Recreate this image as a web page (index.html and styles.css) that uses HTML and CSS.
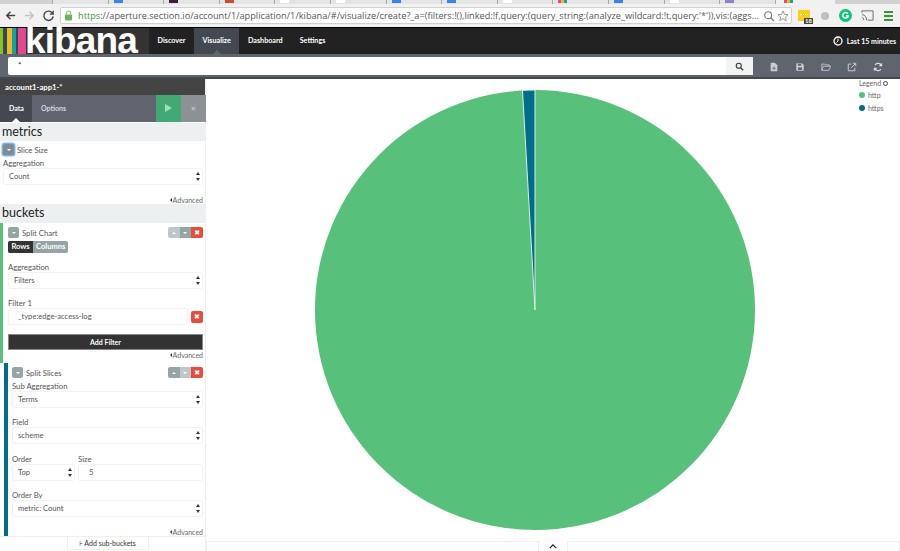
FILE: index.html
```html
<!DOCTYPE html>
<html lang="en">
<head>
    <meta charset="UTF-8">
    <title>Visualize - Kibana</title>
    <link rel="stylesheet" href="styles.css">
</head>
<body>

<div class="chrome-tabs">
    <span class="tab"></span>
    <span class="tab"><i class="fav blue"></i></span>
    <span class="tab"><i class="fav dark"></i></span>
    <span class="tab"><i class="fav red"></i></span>
    <span class="tab"><i class="fav white"></i></span>
    <span class="tab"><i class="fav white"></i></span>
    <span class="tab"><i class="fav blue"></i></span>
    <span class="tab"><i class="fav blue"></i></span>
    <span class="tab"><i class="fav white"></i></span>
    <span class="tab"><i class="fav stripes"></i></span>
    <span class="tab"><i class="fav blue"></i></span>
    <span class="tab"><i class="fav white"></i></span>
    <span class="tab"><i class="fav purple"></i></span>
    <span class="tab tab-active"><i class="fav stripes"></i></span>
</div>

<div class="chrome-bar">
    <svg class="nav-icon" viewBox="0 0 14 14"><path d="M12 7H3M7 3L3 7l4 4" fill="none" stroke="#444" stroke-width="1.6"/></svg>
    <svg class="nav-icon" viewBox="0 0 14 14"><path d="M2 7h9M7 3l4 4-4 4" fill="none" stroke="#c4c4c4" stroke-width="1.6"/></svg>
    <svg class="nav-icon" viewBox="0 0 14 14"><path d="M11.5 5A5 5 0 1 0 12 8M12 2v3.5H8.5" fill="none" stroke="#444" stroke-width="1.5"/></svg>
    <div class="omnibox">
        <svg class="lock" viewBox="0 0 10 12"><path d="M2.5 5V3.5a2.500 2.500 0 0 1 5 0V5" fill="none" stroke="#8fbf7f" stroke-width="1.2"/><rect x="1" y="5" width="8" height="6.5" rx="1" fill="#6db35a"/></svg>
        <span class="url"><span class="https">https</span>://aperture.section.io/account/1/application/1/kibana/#/visualize/create?_a=(filters:!(),linked:!f,query:(query_string:(analyze_wildcard:!t,query:'*')),vis:(aggs...</span>
        <svg class="omni-icon" viewBox="0 0 14 14"><circle cx="6" cy="6" r="4" fill="none" stroke="#777" stroke-width="1.3"/><path d="M9 9l4 4" stroke="#777" stroke-width="1.5"/></svg>
        <svg class="omni-icon" viewBox="0 0 14 14"><path d="M7 1l1.800 4 4.200.4-3.200 2.800 1 4.300L7 10.200l-3.800 2.300 1-4.300L1 5.400 5.200 5z" fill="none" stroke="#888"/></svg>
    </div>
    <span class="ext-yellow"><b class="ext-count">18</b></span>
    <i class="ext-dot"></i>
    <svg class="ext-g" viewBox="0 0 14 14"><circle cx="7" cy="7" r="7" fill="#10c27a"/><path d="M9.5 5A3 3 0 1 0 10 7.500H7.500" fill="none" stroke="#fff" stroke-width="1.6"/></svg>
    <svg class="ext-cast" viewBox="0 0 14 14"><path d="M1 4V2h12v10H7" fill="none" stroke="#666"/><path d="M1 6a6 6 0 0 1 5 6M1 9a3 3 0 0 1 2 3" fill="none" stroke="#666"/></svg>
    <span class="hamburger"><i></i><i></i><i></i></span>
</div>

<nav class="topnav">
    <div class="logo">
        <span class="logo-bars"><i class="b1"></i><i class="b2"></i><i class="b3"></i><i class="b4"></i><i class="b2 thin"></i><i class="b5"></i></span>
        <span class="logo-text">kibana</span>
    </div>
    <a class="nav-link">Discover</a>
    <a class="nav-link active">Visualize</a>
    <a class="nav-link">Dashboard</a>
    <a class="nav-link">Settings</a>
    <span class="timepicker">
        <svg class="clock" viewBox="0 0 10 10"><circle cx="5" cy="5" r="4" fill="none" stroke="#fff" stroke-width="1.3"/><path d="M5 2.500V5L3.500 6.500" fill="none" stroke="#fff"/></svg>
        Last 15 minutes
    </span>
</nav>

<div class="querybar">
    <div class="query">
        <span class="query-text">*</span>
        <span class="query-btn"><svg viewBox="0 0 12 12"><circle cx="5" cy="5" r="3.400" fill="none" stroke="#333" stroke-width="1.4"/><path d="M7.500 7.500L11 11" stroke="#333" stroke-width="1.6"/></svg></span>
    </div>
    <div class="tools">
        <svg viewBox="0 0 12 12"><path d="M2 1h5l3 3v7H2z" fill="#c9ccd1"/><path d="M6 5.500v4M4 7.500h4" stroke="#5f646e"/></svg>
        <svg viewBox="0 0 12 12"><path d="M1.500 1.500h7l2 2v7h-9z" fill="#c9ccd1"/><rect x="3.500" y="2" width="4" height="2.500" fill="#5f646e"/><rect x="3.500" y="6.500" width="5" height="3" fill="#5f646e"/></svg>
        <svg viewBox="0 0 12 12"><path d="M1 10V2.500h3.500l1 1H10v1.500M1 10h8.500l2-5H3z" fill="none" stroke="#c9ccd1"/></svg>
        <svg viewBox="0 0 12 12"><path d="M9.500 7v3.500h-8v-8H5" fill="none" stroke="#c9ccd1" stroke-width="1.2"/><path d="M5 7l5-5M7 1.500h3.500V5" fill="none" stroke="#c9ccd1" stroke-width="1.2"/></svg>
        <svg viewBox="0 0 12 12"><path d="M10 4.500A4.300 4.300 0 0 0 2.500 3.500M2 7.500a4.300 4.300 0 0 0 7.500 1" fill="none" stroke="#dfe1e5" stroke-width="1.5"/><path d="M11 1v4H7zM1 11V7h4z" fill="#dfe1e5"/></svg>
    </div>
</div>

<div class="main">
    <aside class="sidebar">
        <div class="index-title">account1-app1-*</div>
        <div class="side-tabs">
            <span class="side-tab current">Data</span>
            <span class="side-tab">Options</span>
            <span class="side-play"></span>
            <span class="side-close">&#10005;</span>
        </div>

        <h3 class="section-head metrics-head">metrics</h3>
        <div class="metric-block">
            <div class="agg-title first">
                <span class="toggle focused"><i></i></span>
                <span>Slice Size</span>
            </div>
            <label class="field-label">Aggregation</label>
            <div class="select">Count</div>
            <div class="advanced">Advanced</div>
        </div>

        <h3 class="section-head buckets-head">buckets</h3>
        <div class="bucket green">
            <div class="agg-title">
                <span class="toggle"><i></i></span>
                <span>Split Chart</span>
                <span class="agg-btns">
                    <span class="up faded"><i></i></span><span class="down"><i></i></span><span class="remove">&#10006;</span>
                </span>
            </div>
            <div class="rows-cols"><span class="rows">Rows</span><span class="cols">Columns</span></div>
            <label class="field-label gap-label">Aggregation</label>
            <div class="select">Filters</div>
            <label class="field-label gap-label">Filter 1</label>
            <div class="filter-row">
                <div class="input filter-input">_type:edge-access-log</div>
                <span class="filter-remove">&#10006;</span>
            </div>
            <div class="add-filter">Add Filter</div>
            <div class="advanced">Advanced</div>
        </div>

        <div class="bucket blue">
            <div class="agg-title">
                <span class="toggle"><i></i></span>
                <span>Split Slices</span>
                <span class="agg-btns">
                    <span class="up"><i></i></span><span class="down faded"><i></i></span><span class="remove">&#10006;</span>
                </span>
            </div>
            <label class="field-label sub-label">Sub Aggregation</label>
            <div class="select">Terms</div>
            <label class="field-label gap-label">Field</label>
            <div class="select">scheme</div>
            <div class="order-row">
                <div class="order-col">
                    <label class="field-label">Order</label>
                    <div class="select">Top</div>
                </div>
                <div class="size-col">
                    <label class="field-label">Size</label>
                    <div class="input size-input">5</div>
                </div>
            </div>
            <label class="field-label gap-label">Order By</label>
            <div class="select">metric: Count</div>
            <div class="advanced">Advanced</div>
        </div>
        <div class="add-sub"><span>&#8870; Add sub-buckets</span></div>
    </aside>

    <section class="chart-area">
        <div class="chart">
            <svg class="pie" viewBox="0 0 440 440">
                <circle cx="220" cy="220" r="220" fill="#57c17b"/>
                <path d="M220 220L207.5 .4A220 220 0 0 1 220 0Z" fill="#006e8a" stroke="#dcefe3" stroke-width="1"/>
            </svg>
            <div class="legend">
                <div class="legend-title">Legend <i class="legend-toggle"></i></div>
                <div class="legend-item"><i class="dot dot-http"></i>http</div>
                <div class="legend-item"><i class="dot dot-https"></i>https</div>
            </div>
        </div>
        <div class="spy">
            <span class="spy-side"></span>
            <span class="spy-caret"><svg viewBox="0 0 10 6"><path d="M1 5l4-4 4 4" fill="none" stroke="#222" stroke-width="1.6"/></svg></span>
            <span class="spy-side"></span>
        </div>
    </section>
</div>

</body>
</html>
```

FILE: styles.css
```css
* {
    box-sizing: border-box;
}
html, body {
    margin: 0;
    height: 551px;
    overflow: hidden;
}
body {
    font-family: "Lato", "Liberation Sans", "DejaVu Sans", sans-serif;
    font-size: 8px;
    color: #444;
    background: #fff;
    width: 900px;
}

/* browser chrome */
.chrome-tabs {
    height: 4px;
    display: flex;
    padding-left: 52px;
    background: #d2d2d2;
    overflow: hidden;
}
.tab {
    width: 55.6px;
    padding-left: 5px;
    background: #e4e4e4;
    border-left: 1px solid #a8a8a8;
    flex: none;
}
.tab-active {
    background: #f1f1f1;
    padding-left: 8px;
    width: 60px;
}
.fav {
    display: block;
    width: 9px;
    height: 3px;
}
.fav.blue { background: #3b82f0; }
.fav.dark { background: #3d1f3d; }
.fav.red { background: #d04a3a; }
.fav.white { background: #fff; }
.fav.purple { background: #8a86c8; }
.fav.stripes { background: linear-gradient(90deg, #e8478b 33%, #f5b81c 33% 66%, #12a5a0 66%); }

.chrome-bar {
    height: 23px;
    background: #f1f1f1;
    display: flex;
    align-items: center;
    padding-left: 4px;
}
.nav-icon {
    width: 13px;
    height: 13px;
    margin-right: 6px;
    flex: none;
}
.omnibox {
    width: 732px;
    height: 17px;
    margin-left: -1px;
    background: #fff;
    border: 1px solid #d0d0d0;
    border-radius: 2px;
    display: flex;
    align-items: center;
    padding-left: 3px;
    flex: none;
}
.lock {
    width: 9px;
    height: 11px;
    flex: none;
}
.url {
    margin-left: 5px;
    font-family: "Open Sans", "Liberation Sans", sans-serif;
    font-size: 9.2px;
    color: #555;
    white-space: nowrap;
    width: 683px;
    flex: none;
}
.https {
    color: #3a9a3a;
}
.omni-icon {
    width: 12px;
    height: 12px;
    margin-left: 2px;
    flex: none;
}
.ext-yellow {
    position: relative;
    width: 12px;
    height: 11px;
    margin: -1px 0 0 6px;
    background: #f7cf14;
    flex: none;
}
.ext-yellow::before {
    content: "";
    position: absolute;
    left: 2px;
    right: 2px;
    top: 4px;
    border-top: 1px dotted #fff;
}
.ext-count {
    position: absolute;
    right: -3px;
    bottom: -3px;
    background: #444;
    color: #fff;
    font-size: 6px;
    line-height: 6px;
    padding: 0 1px;
}
.ext-dot {
    width: 8px;
    height: 8px;
    margin-left: 11px;
    border-radius: 50%;
    background: #c0c0c0;
    flex: none;
}
.ext-g {
    width: 13px;
    height: 13px;
    margin-left: 10px;
    flex: none;
}
.ext-cast {
    width: 13px;
    height: 13px;
    margin-left: 9px;
    flex: none;
}
.hamburger {
    margin-left: 10px;
    width: 9px;
    display: flex;
    flex-direction: column;
    gap: 2px;
    flex: none;
}
.hamburger i {
    height: 2px;
    background: #2e9a36;
}

/* kibana nav */
.topnav {
    height: 27px;
    background: #222;
    border-top: 1px solid #000;
    display: flex;
    align-items: stretch;
}
.logo {
    width: 149px;
    background: #333;
    display: flex;
    flex: none;
}
.logo-bars {
    display: flex;
    height: 26px;
    flex: none;
}
.logo-bars i {
    display: block;
}
.b1 { width: 3px; background: #8cc220; }
.b2 { width: 4px; background: #2f4a5c; }
.b2.thin { width: 2px; }
.b3 { width: 5px; background: #f5b81c; }
.b4 { width: 4px; background: #12a5a0; }
.b5 { width: 8px; background: #e8478b; }
.logo-text {
    font-family: "Liberation Sans", sans-serif;
    font-size: 37px;
    font-weight: bold;
    color: #fff;
    line-height: 26px;
    letter-spacing: -0.9px;
    margin-left: -1px;
}
.nav-link {
    padding: 0 8.5px;
    line-height: 26px;
    font-size: 7.2px;
    font-weight: bold;
    color: #fff;
    white-space: nowrap;
}
.nav-link.active {
    background: #444951;
    position: relative;
}
.nav-link.active::after {
    content: "";
    position: absolute;
    left: 50%;
    bottom: 0;
    margin-left: -4px;
    border: 4px solid transparent;
    border-top: 0;
    border-bottom-color: #5f646e;
}
.timepicker {
    margin-left: auto;
    padding-right: 4px;
    display: flex;
    align-items: center;
    gap: 4px;
    font-weight: bold;
    color: #fff;
    font-size: 7px;
}
.clock {
    width: 10px;
    height: 10px;
}

/* search */
.querybar {
    height: 25px;
    background: #5f646e;
    border-bottom: 2px solid #444951;
    display: flex;
    padding: 3px 0 0 8px;
}
.query {
    width: 745px;
    height: 18px;
    background: #fff;
    border-radius: 2px;
    display: flex;
    justify-content: space-between;
}
.query-text {
    padding: 3px 0 0 10px;
    font-size: 8px;
    color: #222;
}
.query-btn {
    width: 27px;
    background: #f1f3f4;
    display: flex;
    align-items: center;
    justify-content: center;
}
.query-btn svg {
    width: 9px;
    height: 9px;
}
.tools {
    display: flex;
    gap: 16px;
    padding: 5px 0 0 16px;
}
.tools svg {
    width: 10px;
    height: 10px;
}

/* layout */
.main {
    display: flex;
    height: 472px;
}
.sidebar {
    width: 206px;
    background: #fff;
    border-right: 1px solid #eceff0;
    flex: none;
}
.index-title {
    height: 16px;
    background: #444;
    color: #fff;
    font-weight: bold;
    font-size: 7.7px;
    line-height: 16px;
    padding-left: 5px;
}
.side-tabs {
    height: 27px;
    background: #5f646e;
    display: flex;
    align-items: center;
    color: #d6d8da;
    font-weight: bold;
    font-size: 7px;
    margin-right: -1px;
}
.side-tab {
    height: 27px;
    line-height: 27px;
    padding: 0 9px;
    text-align: center;
}
.side-tab.current {
    width: 32px;
    background: #444951;
    color: #fff;
    position: relative;
}
.side-tab.current::after {
    content: "";
    position: absolute;
    left: 12px;
    bottom: 0;
    border: 4px solid transparent;
    border-top: 0;
    border-bottom-color: #fff;
}
.side-play {
    margin-left: auto;
    width: 25px;
    height: 27px;
    background: #42a874;
    position: relative;
}
.side-play::after {
    content: "";
    position: absolute;
    left: 9px;
    top: 9px;
    border: 4px solid transparent;
    border-left: 7px solid #a4dcbd;
    border-right: 0;
}
.side-close {
    width: 25px;
    height: 27px;
    line-height: 27px;
    background: #8a9296;
    color: #ccd1d3;
    text-align: center;
    font-size: 7px;
}
.section-head {
    margin: 0;
    background: #ecf0f1;
    color: #222;
    font-size: 12.5px;
    font-weight: normal;
    height: 19px;
    line-height: 18px;
    padding-left: 2px;
}
.metrics-head {
    margin-top: 1px;
    height: 18px;
}
.metric-block {
    padding: 0 2px 0 3px;
}
.agg-title {
    display: flex;
    align-items: center;
    gap: 3px;
    height: 13px;
    margin-top: 3px;
    font-size: 7.7px;
    color: #555;
}
.agg-title.first {
    margin-top: 1px;
    height: 15px;
}
.toggle {
    width: 11px;
    height: 11px;
    background: #95a5a6;
    border-radius: 2px;
    display: flex;
    align-items: center;
    justify-content: center;
    flex: none;
}
.toggle.focused {
    box-shadow: 0 0 0 1.5px #7db4e8;
    background: #7d8c95;
}
.toggle i, .down i {
    display: block;
    border: 2px solid transparent;
    border-bottom: 0;
    border-top: 2.5px solid #fff;
}
.up i {
    display: block;
    border: 2px solid transparent;
    border-top: 0;
    border-bottom: 2.5px solid #fff;
}
.agg-btns {
    margin-left: auto;
    display: flex;
    border-radius: 2px;
    overflow: hidden;
}
.agg-btns span {
    width: 11.7px;
    height: 11px;
    background: #95a5a6;
    display: flex;
    align-items: center;
    justify-content: center;
}
.agg-btns .faded {
    background: #bdc6c9;
}
.agg-btns .remove, .filter-remove {
    background: #e74c3c;
    color: #fff;
    font-family: "DejaVu Sans", sans-serif;
    font-size: 7px;
}
.field-label {
    display: block;
    font-size: 7.7px;
    color: #555;
    line-height: 8px;
}
.metric-block .field-label {
    margin-top: 2px;
}
.select, .input {
    height: 17px;
    margin-top: 1px;
    border: 1px solid #f0f2f3;
    border-radius: 3px;
    background: #fff;
    color: #555;
    font-size: 7.6px;
    line-height: 15px;
    padding-left: 5px;
    position: relative;
}
.select::before, .select::after {
    content: "";
    position: absolute;
    right: 2px;
    border: 2px solid transparent;
}
.select::before {
    top: 3px;
    border-top: 0;
    border-bottom: 3px solid #333;
}
.select::after {
    bottom: 3px;
    border-bottom: 0;
    border-top: 3px solid #333;
}
.advanced {
    text-align: right;
    color: #666;
    font-size: 7px;
    line-height: 8px;
    margin-top: 11px;
}
.advanced::before {
    content: "";
    display: inline-block;
    border: 2px solid transparent;
    border-left: 0;
    border-right: 2px solid #333;
    margin-right: 1px;
    vertical-align: 1px;
}
.bucket {
    padding: 0 2px 0 5px;
    overflow: hidden;
}
.bucket.green {
    border-left: 3px solid #57c17b;
    height: 140px;
}
.bucket.blue {
    border-left: 4px solid #006e8a;
    margin-left: 4px;
    padding-left: 4px;
    height: 173px;
}
.rows-cols {
    display: flex;
    width: fit-content;
    margin-top: 2px;
    background: #95a5a6;
    border-radius: 2px;
    overflow: hidden;
    color: #fff;
    font-weight: bold;
    font-size: 7.5px;
    line-height: 12px;
}
.rows {
    background: #333;
    padding: 0 3.5px;
}
.cols {
    padding: 0 3px;
}
.gap-label {
    margin-top: 10px;
}
.filter-row {
    display: flex;
    gap: 3px;
    align-items: center;
    margin-top: 1px;
}
.filter-input {
    flex: 1;
    margin-top: 0;
    padding-left: 9px;
}
.filter-remove {
    width: 12px;
    height: 12px;
    border-radius: 2px;
    display: flex;
    align-items: center;
    justify-content: center;
}
.add-filter {
    height: 16px;
    margin-top: 9px;
    background: #333;
    border: 1px solid #888;
    color: #fff;
    font-weight: bold;
    font-size: 7px;
    line-height: 14px;
    text-align: center;
}
.bucket.green .advanced {
    margin-top: 1px;
}
.sub-label {
    margin-top: 3px;
}
.order-row {
    display: flex;
    gap: 3px;
    margin-top: 11px;
}
.order-col {
    width: 63px;
}
.size-col {
    flex: 1;
}
.size-input {
    padding-left: 10px;
}
.add-sub {
    display: flex;
    justify-content: center;
    height: 14px;
    border-top: 1px solid #eee;
    padding-left: 10px;
}
.add-sub span {
    width: 82px;
    text-align: center;
    font-size: 7px;
    color: #333;
    line-height: 12px;
    border: 1px solid #eee;
    border-top: 0;
    height: 13px;
}

/* chart */
.chart-area {
    flex: 1;
    display: flex;
    flex-direction: column;
}
.chart {
    flex: 1;
    position: relative;
}
.pie {
    position: absolute;
    left: 109px;
    top: 11px;
    width: 440px;
    height: 440px;
}
.legend {
    position: absolute;
    left: 653px;
    top: 0;
    color: #666;
    font-size: 7px;
}
.legend-title {
    line-height: 9px;
}
.legend-toggle {
    display: inline-block;
    width: 5px;
    height: 5px;
    border-radius: 50%;
    border: 1px solid #444;
}
.legend-item {
    display: flex;
    align-items: center;
    gap: 3px;
    height: 13px;
}
.dot {
    width: 6px;
    height: 6px;
    border-radius: 50%;
}
.dot-http {
    background: #57c17b;
}
.dot-https {
    background: #006e8a;
}
.spy {
    height: 10px;
    display: flex;
    flex: none;
}
.spy-side {
    flex: 1;
    border-top: 1px solid #eee;
    border-left: 1px solid #eee;
    border-right: 1px solid #eee;
}
.spy-caret {
    width: 28px;
    display: flex;
    justify-content: center;
    padding-top: 3px;
}
.spy-caret svg {
    width: 8px;
    height: 5px;
}
```
